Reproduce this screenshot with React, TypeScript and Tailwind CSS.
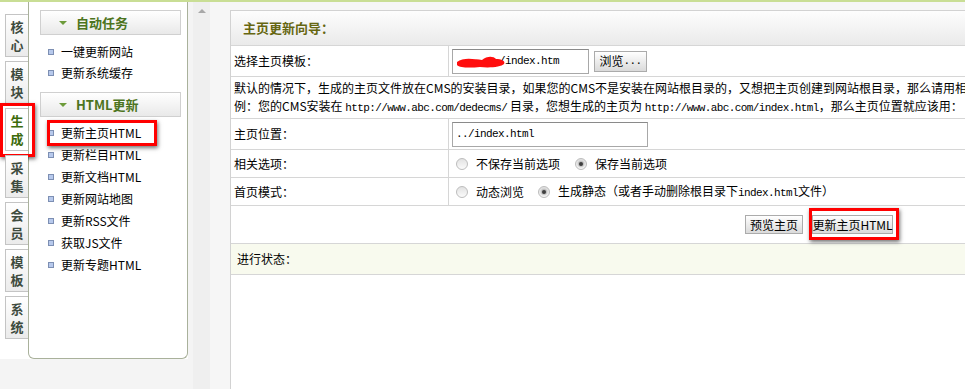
import React from 'react';

const mono = "font-['Liberation_Mono'] text-[11px] tracking-[-0.6px]";
const redBox = "absolute border-[3px] border-[#ff0000] shadow-[1px_2px_4px_rgba(0,0,0,0.55)] pointer-events-none";

const TABS: { chars: string[]; active?: boolean }[] = [
    { chars: ['核', '心'] },
    { chars: ['模', '块'] },
    { chars: ['生', '成'], active: true },
    { chars: ['采', '集'] },
    { chars: ['会', '员'] },
    { chars: ['模', '板'] },
    { chars: ['系', '统'] },
];

const SideTab: React.FC<{ chars: string[]; active?: boolean }> = ({ chars, active }) => (
    <div
        className={`relative h-[43px] w-[23px] flex flex-col items-center justify-center border border-r-0 border-[#c4c4c4] text-[13px] font-bold ${
            active ? 'bg-white text-[#3c6b0c]' : 'bg-gradient-to-b from-white to-[#ebebeb] text-[#3e4b3e]'
        }`}
    >
        {chars.map((c) => (
            <span key={c} className="block h-[18px] leading-[18px]">
                {c}
            </span>
        ))}
        {active && <div className={`${redBox} -left-[6px] -top-[6px] w-[35px] h-[54px]`} />}
    </div>
);

const NavHeader: React.FC<{ title: string }> = ({ title }) => (
    <div className="h-[25px] flex items-center border border-[#d0d0d0] bg-gradient-to-b from-white to-[#e9e9e9] pl-[18px]">
        <span className="w-0 h-0 border-l-[4px] border-r-[4px] border-t-[4px] border-l-transparent border-r-transparent border-t-[#6d9b3a]" />
        <span className="ml-[9px] text-[13px] font-bold text-[#4c7420]">{title}</span>
    </div>
);

const NavItem: React.FC<{ label: string; h: string; marked?: boolean }> = ({ label, h, marked }) => (
    <div className={`relative flex items-center pl-[8px] ${h}`}>
        <span className="w-[6px] h-[6px] border border-[#7d8fb3] bg-[#b7c9ec]" />
        <span className="ml-[7px] text-[12px] text-black leading-none">{label}</span>
        {marked && <div className={`${redBox} left-[7px] -top-[2px] w-[110px] h-[26px]`} />}
    </div>
);

const Radio: React.FC<{ checked?: boolean }> = ({ checked }) => (
    <span className="w-[12px] h-[12px] rounded-full border border-[#bdbdbd] bg-gradient-to-b from-[#e2e2e2] to-[#fbfbfb] flex items-center justify-center">
        {checked && <span className="w-[4px] h-[4px] rounded-full bg-[#3f3f3f] shadow-[0_0_2px_1px_rgba(90,90,90,0.45)]" />}
    </span>
);

const Btn: React.FC<{ children: React.ReactNode; className?: string }> = ({ children, className = '' }) => (
    <button className={`flex items-center justify-center border border-[#ababab] bg-gradient-to-b from-white to-[#dadada] text-[12px] text-black leading-none ${className}`}>
        {children}
    </button>
);

const Row: React.FC<{ label: string; h: string; children: React.ReactNode }> = ({ label, h, children }) => (
    <div className={`flex border-b border-[#d6d6d6] ${h}`}>
        <div className="w-[218px] border-r border-[#d6d6d6] flex items-center pl-[3px]">{label}</div>
        <div className="flex-1 flex items-center pl-[3px]">{children}</div>
    </div>
);

const App: React.FC = () => {
    return (
        <div className="w-[965px] h-[389px] overflow-hidden flex border-t-2 border-[#c9de95] bg-white font-['Noto_Sans_CJK_SC',sans-serif] text-[12px] text-black">
            {/* left frame */}
            <div className="w-[210px] shrink-0 flex bg-[#f4f4f4]">
                <div className="w-[188px] h-[357px] flex bg-white">
                    <div className="w-[28px] pl-[5px] pt-[12px] flex flex-col gap-[4px]">
                        {TABS.map((t, i) => (
                            <SideTab key={i} chars={t.chars} active={t.active} />
                        ))}
                    </div>
                    <div className="w-[160px] h-[357px] border-x border-b border-[#a9b19b] rounded-b-[6px] bg-white pl-[11px] pr-[6px] pt-[8px]">
                        <NavHeader title="自动任务" />
                        <div className="mt-[6px]">
                            <NavItem label="一键更新网站" h="h-[21px]" />
                            <NavItem label="更新系统缓存" h="h-[21px]" />
                        </div>
                        <div className="mt-[9px]">
                            <NavHeader title="HTML更新" />
                        </div>
                        <div className="mt-[5px]">
                            <NavItem label="更新主页HTML" h="h-[22px]" marked />
                            <NavItem label="更新栏目HTML" h="h-[22px]" />
                            <NavItem label="更新文档HTML" h="h-[22px]" />
                            <NavItem label="更新网站地图" h="h-[22px]" />
                            <NavItem label="更新RSS文件" h="h-[22px]" />
                            <NavItem label="获取JS文件" h="h-[22px]" />
                            <NavItem label="更新专题HTML" h="h-[22px]" />
                        </div>
                    </div>
                </div>
                <div className="w-[22px] border-l-[5px] border-[#f4f4f4] bg-[#efefef] pl-[5px] pt-[7px]">
                    <span className="block w-0 h-0 border-l-[4px] border-r-[4px] border-b-[4px] border-l-transparent border-r-transparent border-b-[#a8a8a8]" />
                </div>
            </div>

            {/* main frame */}
            <div className="flex-1 flex bg-[#f6f6f6] pl-[20px] pt-[8px]">
                <div className="w-[760px] shrink-0 bg-white border-l border-t border-[#d2d2d2] whitespace-nowrap">
                    <div className="h-[35px] flex items-center pl-[12px] border-b border-[#d6d6d6] bg-gradient-to-b from-[#fdfdfd] to-[#eaeaea] text-[13px] font-bold text-[#666611]">
                        主页更新向导：
                    </div>

                    <Row label="选择主页模板：" h="h-[31px]">
                        <div className="relative w-[137px] h-[25px] border border-[#a8a8a8] border-t-[#8a8a8a] bg-white flex items-center pl-[46px]">
                            <span className={mono}>/index.htm</span>
                            <svg className="absolute left-[1px] top-[3px]" width="54" height="18" viewBox="0 0 54 18">
                                <defs>
                                    <filter id="soft">
                                        <feGaussianBlur stdDeviation="0.7" />
                                    </filter>
                                </defs>
                                <path
                                    d="M3 9 C 9 4, 20 6, 28 7 C 33 3, 39 3, 42 6 C 47 6, 52 8, 50 11 C 47 14, 36 15, 26 14 C 16 15, 6 15, 3 12 Z"
                                    fill="#ff0a0a"
                                    filter="url(#soft)"
                                />
                            </svg>
                        </div>
                        <Btn className="ml-[5px] w-[53px] h-[21px]">
                            浏览<span className={mono}>...</span>
                        </Btn>
                    </Row>

                    <div className="h-[42px] border-b border-[#d6d6d6] pl-[3px] pt-[2px] leading-[18px] overflow-hidden">
                        <div>默认的情况下，生成的主页文件放在CMS的安装目录，如果您的CMS不是安装在网站根目录的，又想把主页创建到网站根目录，那么请用相对</div>
                        <div>
                            例：您的CMS安装在 <span className={mono}>http://www.abc.com/dedecms/</span>
                            {' 目录，您想生成的主页为 '}
                            <span className={mono}>http://www.abc.com/index.html</span>，那么主页位置就应该用：
                        </div>
                    </div>

                    <Row label="主页位置：" h="h-[31px]">
                        <div className="w-[196px] h-[25px] border border-[#a8a8a8] border-t-[#8a8a8a] bg-white flex items-center pl-[3px]">
                            <span className={mono}>../index.html</span>
                        </div>
                    </Row>

                    <Row label="相关选项：" h="h-[28px]">
                        <div className="flex items-center pl-[4px]">
                            <Radio />
                            <span className="ml-[8px]">不保存当前选项</span>
                            <span className="ml-[15px]">
                                <Radio checked />
                            </span>
                            <span className="ml-[8px]">保存当前选项</span>
                        </div>
                    </Row>

                    <Row label="首页模式：" h="h-[28px]">
                        <div className="flex items-center pl-[4px]">
                            <Radio />
                            <span className="ml-[8px]">动态浏览</span>
                            <span className="ml-[14px]">
                                <Radio checked />
                            </span>
                            <span className="ml-[8px]">
                                生成静态（或者手动删除根目录下<span className={mono}>index.html</span>文件）
                            </span>
                        </div>
                    </Row>

                    <div className="h-[38px] border-b border-[#d6d6d6] flex items-center pl-[514px]">
                        <Btn className="w-[58px] h-[19px]">预览主页</Btn>
                        <div className="relative ml-[9px]">
                            <Btn className="w-[81px] h-[19px]">更新主页HTML</Btn>
                            <div className={`${redBox} -left-[3px] -top-[7px] w-[90px] h-[32px]`} />
                        </div>
                    </div>

                    <div className="h-[31px] border-b border-[#d6d6d6] bg-[#f8faee] flex items-center pl-[6px]">进行状态：</div>
                </div>
            </div>
        </div>
    );
};

export default App;
